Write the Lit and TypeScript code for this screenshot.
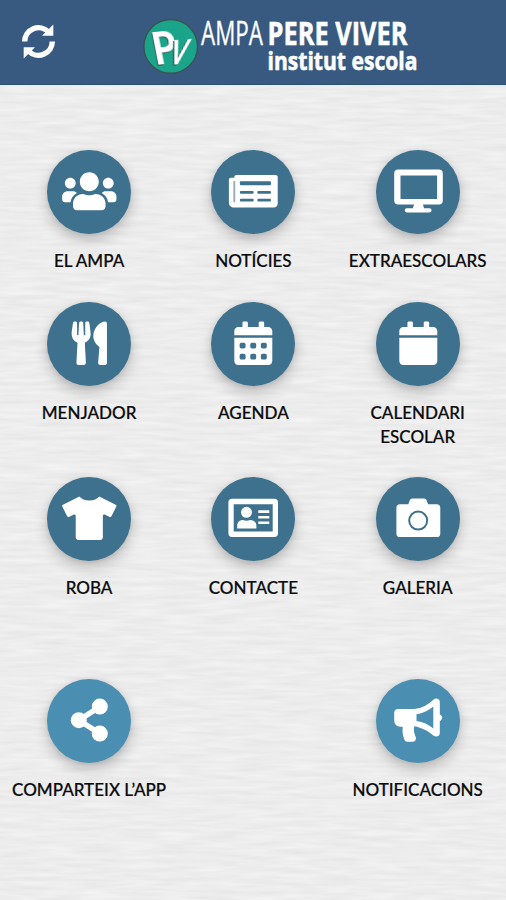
import { LitElement, html, css, svg } from "lit";
import { customElement, property } from "lit/decorators.js";

// Glyphs drawn on a 512-unit-high grid, centred inside the 84px disc.
const glyph = (width: number, body: unknown) =>
  svg`<g transform="translate(42.3 41.3) scale(0.0848) translate(${-width / 2} -256)">${body}</g>`;

const calendarBase = svg`<path d="M0 464c0 26.500 21.500 48 48 48h352c26.500 0 48-21.500 48-48V192H0v272zM400 64h-48V16c0-8.800-7.200-16-16-16h-32c-8.800 0-16 7.200-16 16v48H160V16c0-8.800-7.200-16-16-16h-32c-8.800 0-16 7.200-16 16v48H48C21.500 64 0 85.500 0 112v48h448v-48c0-26.500-21.500-48-48-48z"/>`;

const icons: Record<string, unknown> = {
  users: glyph(640, svg`<path d="M96 224c35.300 0 64-28.700 64-64s-28.700-64-64-64-64 28.700-64 64 28.700 64 64 64zm448 0c35.300 0 64-28.700 64-64s-28.700-64-64-64-64 28.700-64 64 28.700 64 64 64zm32 32h-64c-17.600 0-33.500 7.100-45.100 18.600 40.300 22.100 68.900 62 75.100 109.400h66c17.700 0 32-14.300 32-32v-32c0-35.300-28.700-64-64-64zm-256 0c61.900 0 112-50.100 112-112S381.900 32 320 32 208 82.100 208 144s50.100 112 112 112zm76.800 32h-8.300c-20.800 10-43.900 16-68.500 16s-47.600-6-68.500-16h-8.300C179.600 288 128 339.600 128 403.200V432c0 26.500 21.500 48 48 48h288c26.500 0 48-21.500 48-48v-28.800c0-63.600-51.600-115.200-115.200-115.200zm-223.700-13.400C161.500 263.100 145.600 256 128 256H64c-35.300 0-64 28.700-64 64v32c0 17.700 14.300 32 32 32h65.900c6.300-47.400 34.900-87.300 75.200-109.400z"/>`),
  news: glyph(576, svg`
    <path d="M552 64H88c-13.300 0-24 10.700-24 24v8H24c-13.300 0-24 10.700-24 24v272c0 30.900 25.100 56 56 56h472c26.500 0 48-21.500 48-48V88c0-13.300-10.700-24-24-24z"/>
    <path class="slit" d="M64 136v250"/>
    <g class="cut"><rect x="130" y="138" width="366" height="46" rx="10"/>
    <rect x="130" y="252" width="162" height="32" rx="12"/><rect x="336" y="252" width="160" height="32" rx="12"/>
    <rect x="130" y="344" width="162" height="32" rx="12"/><rect x="336" y="344" width="160" height="32" rx="12"/></g>`),
  desktop: svg`<path fill-rule="evenodd" d="M22.200 19.500h40.600a4 4 0 0 1 4 4v27a4 4 0 0 1-4 4H22.200a4 4 0 0 1-4-4v-27a4 4 0 0 1 4-4zM24.500 25.600v23.300h36.600V25.600z"/>
    <path d="M38.200 54h8.600l1.300 4.300h5.400a2 2 0 0 1 0 4.100H30.800a2 2 0 0 1 0-4.100h6.100z"/>`,
  utensils: glyph(416, svg`<path d="M207.900 15.200c.8 4.700 16.100 94.500 16.100 128.800 0 52.300-27.800 89.600-68.900 104.600L168 486.700c.7 13.700-10.200 25.300-24 25.300H80c-13.700 0-24.700-11.500-24-25.300l12.900-238.100C27.700 233.600 0 196.200 0 144 0 109.600 15.300 19.900 16.100 15.200 19.300-5.100 61.400-5.400 64 16.300v141.200c1.300 3.400 15.100 3.200 16 0 1.400-25.300 7.900-139.200 8-141.800 3.300-20.800 44.700-20.800 47.900 0 .2 2.700 6.600 116.500 8 141.800.9 3.200 14.800 3.400 16 0V16.300c2.600-21.600 44.800-21.400 48-1.100zm119.200 285.700l-15 185.100c-1.200 14 9.900 26 23.900 26h56c13.300 0 24-10.700 24-24V24c0-13.200-10.700-24-24-24-82.500 0-221.400 178.500-64.900 300.900z"/>`),
  agenda: glyph(448, svg`${calendarBase}<g class="cut">${[284, 414].map((y) =>
    [98, 223, 348].map((x) => svg`<rect x=${x - 35} y=${y - 34} width="70" height="68" rx="20"/>`))}</g>`),
  calendar: glyph(448, calendarBase),
  shirt: glyph(640, svg`<path d="M631.200 96.500L436.500 0C416.400 27.800 371.900 47.200 320 47.200S223.600 27.800 203.500 0L8.800 96.500c-7.900 4-11.100 13.600-7.200 21.500l57.200 114.500c4 7.900 13.600 11.100 21.500 7.200l56.600-27.700c10.600-5.200 23 2.500 23 14.400V480c0 17.700 14.300 32 32 32h256c17.700 0 32-14.300 32-32V226.300c0-11.800 12.400-19.600 23-14.400l56.600 27.700c7.900 4 17.500.8 21.500-7.200L638.300 118c4-7.900.8-17.600-7.100-21.500z"/>`),
  card: svg`<path fill-rule="evenodd" d="M21 21.700h42.400a3.600 3.600 0 0 1 3.600 3.600v31a3.600 3.600 0 0 1-3.600 3.600H21a3.600 3.600 0 0 1-3.600-3.600v-31a3.600 3.600 0 0 1 3.600-3.600zM22.700 27.200v27.400h39V27.200z"/>
    <circle cx="35.500" cy="35.300" r="5.500"/>
    <path d="M26.200 51.400v-2.500c0-4 2.500-6 5.800-6 2 1 5 1 7.200 0 3.300 0 6.200 2 6.200 6v2.500z"/>
    <path d="M47.300 33.300h11v2.600h-11zM47.300 38.900h11v2.600h-11zM47.300 44.400h11v2.600h-11z"/>`,
  camera: svg`<path d="M24 27.200h8.300l1.500-3.900a2.600 2.600 0 0 1 2.400-1.700h12a2.600 2.600 0 0 1 2.400 1.700l1.500 3.900h8.500a3.700 3.700 0 0 1 3.700 3.700v25.500a3.700 3.700 0 0 1-3.700 3.700H24.100a3.700 3.700 0 0 1-3.700-3.700V30.900a3.700 3.700 0 0 1 3.600-3.700z"/>
    <circle class="lens" cx="42.200" cy="43.600" r="9"/>`,
  share: svg`<path class="link" d="M52.800 27.700L31.800 41.300l21 13.200"/>
    <circle cx="52.800" cy="27.600" r="8"/><circle cx="31.800" cy="41.200" r="8"/><circle cx="52.800" cy="54.600" r="8"/>`,
  horn: svg`<path d="M21.600 30H38C46 29.500 52.500 25.500 57.300 20.800c2.500-2.200 6.200-1.200 6.500 2v12.600c3.200 1.300 3.200 5.200 0 6.500v12.500c-.3 3-4 4-6.500 2C52.500 52.300 46 48.500 38.300 47.200c-1.200 4.800.6 8 1.500 11 .6 2.600-.8 4.600-3.500 4.600h-4.600c-1.800 0-2.900-.8-3.500-2.500-1.500-4-2-8.300-1.500-12.600h-2.500a6 6 0 0 1-6-6V34a4 4 0 0 1 3.400-4z"/>
    <path class="cut" d="M40.500 35.300C47 34.500 52.500 31.500 57.300 27.600v21.800C52.500 45.500 47 42.800 40.500 42z"/>`,
};

@customElement("menu-item")
class MenuItem extends LitElement {
  @property() icon = "";
  @property() label = "";
  static styles = css`
    :host { display: flex; flex-direction: column; align-items: center; gap: 15px; --disc: #3d718d; }
    :host([accent]) { --disc: #4a8eb1; }
    .disc { width: 84px; height: 84px; border-radius: 50%; background: var(--disc); box-shadow: 0 6px 14px rgba(0, 0, 0, 0.22), 0 1px 5px rgba(0, 0, 0, 0.08); }
    .art { display: block; fill: #fff; }
    .cut { fill: var(--disc); }
    .slit { fill: none; stroke: #9cabb6; stroke-width: 22; }
    .lens { fill: none; stroke: var(--disc); stroke-width: 2; }
    .link { fill: none; stroke: #fff; stroke-width: 5.400; }
    .label { font: 500 17.050px/24px Lato, "Open Sans", sans-serif; text-align: center; color: #0b0b0d; -webkit-text-stroke: 0.200px #0b0b0d; }
  `;
  render() {
    return html`<div class="disc"><svg class="art" width="84" height="84" viewBox="0 0 84 84">${icons[this.icon]}</svg></div>
      <div class="label">${this.label}</div>`;
  }
}

@customElement("app-header")
class AppHeader extends LitElement {
  static styles = css`
    :host { display: block; height: 85px; box-sizing: border-box; background: #385a80; border-bottom: 1px solid #285078; }
    .art { display: block; }
    .arrows { fill: none; stroke: #fff; stroke-width: 5.400; }
    .solid { fill: #fff; }
    .seal { fill: #1aa58b; stroke: #3e4f50; stroke-width: 1.300; }
    .mono { font: 900 46px Lato, sans-serif; fill: #fff; filter: drop-shadow(-1px 1px 0 #24594f); }
    .vee { font-size: 34px; }
    .thin { font: 400 33px "Open Sans", sans-serif; fill: #fff; stroke: #fff; stroke-width: 0.300; }
    .bold { font: 700 33px "Open Sans", sans-serif; fill: #fff; stroke: #fff; stroke-width: 0.600; }
    .sub { font-size: 25px; }
  `;
  render() {
    return html`<svg class="art" width="506" height="84" viewBox="0 0 506 84">
      <g class="arrows"><path d="M24.700 41.500A13.800 13.800 0 0 1 48.500 32"/><path d="M52.300 41.500A13.800 13.800 0 0 1 28.500 51"/></g>
      <g class="solid"><path d="M53.300 24.600v11.200H42z"/><path d="M23.700 58.400V47.200H35z"/></g>
      <circle class="seal" cx="170.700" cy="46.400" r="26.800"/>
      <text class="mono" transform="translate(155.500 65) rotate(-6) skewX(5)" textLength="24" lengthAdjust="spacingAndGlyphs">P</text>
      <text class="mono vee" transform="translate(167.500 65) rotate(-4) skewX(-20)" textLength="17" lengthAdjust="spacingAndGlyphs">V</text>
      <text class="thin" x="201" y="44.600" textLength="62" lengthAdjust="spacingAndGlyphs">AMPA</text>
      <text class="bold" x="267.500" y="44.600" textLength="140" lengthAdjust="spacingAndGlyphs">PERE VIVER</text>
      <text class="bold sub" x="267.500" y="70" textLength="150" lengthAdjust="spacingAndGlyphs">institut escola</text>
    </svg>`;
  }
}

@customElement("app-root")
class AppRoot extends LitElement {
  static styles = css`
    :host { display: block; position: relative; height: 900px; overflow: hidden; background: #ececec; }
    .paper { position: absolute; inset: 0; z-index: 0; }
    .page { position: relative; z-index: 1; }
    .grid { display: grid; grid-template-columns: repeat(3, 164.300px); justify-content: center; row-gap: 28.300px; padding: 65.400px 0 0 0.800px; }
    .footer { padding-top: 79.300px; }
    .last { grid-column: 3; }
  `;
  private items = [
    ["users", "EL AMPA"], ["news", "NOTÍCIES"], ["desktop", "EXTRAESCOLARS"],
    ["utensils", "MENJADOR"], ["agenda", "AGENDA"], ["calendar", "CALENDARI ESCOLAR"],
    ["shirt", "ROBA"], ["card", "CONTACTE"], ["camera", "GALERIA"],
  ];
  render() {
    return html`
      <svg class="paper" width="506" height="900">
        <filter id="grain" x="0" y="0" width="100%" height="100%" color-interpolation-filters="sRGB">
          <feTurbulence type="fractalNoise" baseFrequency="0.025 0.22" numOctaves="2" seed="7"/>
          <feColorMatrix values="0.07 0 0 0 0.893  0.07 0 0 0 0.893  0.07 0 0 0 0.893  0 0 0 0 1"/>
        </filter>
        <rect width="506" height="900" filter="url(#grain)"/>
      </svg>
      <div class="page">
        <app-header></app-header>
        <div class="grid">${this.items.map(([icon, label]) => html`<menu-item icon=${icon} label=${label}></menu-item>`)}</div>
        <div class="grid footer">
          <menu-item accent icon="share" label="COMPARTEIX L’APP"></menu-item>
          <menu-item accent class="last" icon="horn" label="NOTIFICACIONS"></menu-item>
        </div>
      </div>`;
  }
}
